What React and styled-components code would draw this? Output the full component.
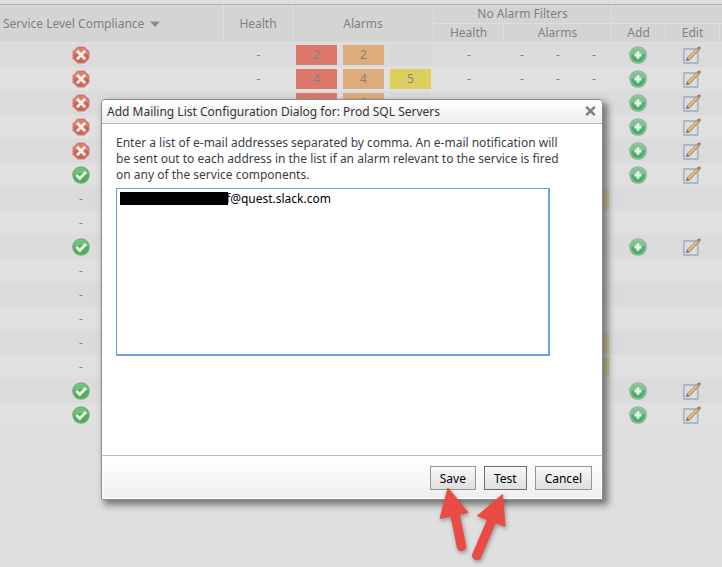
import React, { Fragment, useState } from "react";
import styled, { createGlobalStyle } from "styled-components";

const rows = [
  { state: "error", alarms: [2, 2, ""], filters: ["-", "-", "-"], actions: true },
  { state: "error", alarms: [4, 4, 5], filters: ["-", "-", "-"], actions: true },
  { state: "error", alarms: [4, 2, ""], actions: true },
  { state: "error", actions: true },
  { state: "error", actions: true },
  { state: "ok", actions: true },
  { filtered: true },
  {},
  { state: "ok", actions: true },
  {},
  {},
  {},
  { filtered: true },
  { filtered: true },
  { state: "ok", actions: true },
  { state: "ok", actions: true },
];

const alarmColors = ["#de786a", "#deab7a", "#dccf5e"];

function ErrorIcon() {
  return (
    <Icon viewBox="0 0 18 18" role="img" aria-label="Error">
      <path d="M5.6 .5h6.8l5.1 5.1v6.8l-5.1 5.1H5.6L.5 12.4V5.6z" fill="#c9837c" />
      <path d="M6 1.6h6L16.4 6v6L12 16.4H6L1.6 12V6z" fill="#d5604f" />
      <path d="M6 1.6h6L16.4 6v2.4Q9 6.4 1.6 9V6z" fill="#dc8073" />
      <path
        d="M6 5.8l6.2 6.4M12.2 5.8L6 12.2"
        stroke="#efebe8"
        strokeWidth="3"
        strokeLinecap="square"
      />
    </Icon>
  );
}

function OkIcon() {
  return (
    <Icon viewBox="0 0 18 18" role="img" aria-label="OK">
      <circle cx="9" cy="9" r="8.8" fill="#7fb586" />
      <circle cx="9" cy="9" r="7.9" fill="#4bb153" />
      <path d="M1.8 8.5a7.2 7.2 0 0 1 14.4 0Q9 5.5 1.8 8.5z" fill="#74bf79" />
      <path
        d="M4.2 8.8l3.6 3.7 6.2-6.6"
        fill="none"
        stroke="#f0f3ee"
        strokeWidth="2.9"
      />
    </Icon>
  );
}

function AddIcon() {
  return (
    <Icon viewBox="0 0 18 18" aria-hidden="true">
      <circle cx="9" cy="9" r="8.8" fill="#7dae8b" />
      <circle cx="9" cy="9" r="7.8" fill="#a3d2ae" />
      <circle cx="9" cy="9.4" r="7" fill="#4aaf68" />
      <path d="M2.4 8.6a6.7 6.7 0 0 1 13.2 0Q9 6.2 2.4 8.6z" fill="#83c494" />
      <path d="M9 5.4v7.4M5.3 9.1h7.4" stroke="#eef3ee" strokeWidth="2.8" />
    </Icon>
  );
}

function EditIcon() {
  return (
    <Icon viewBox="0 0 18 18" aria-hidden="true">
      <path d="M.8 3h14v14H.8z" fill="#d6dadf" stroke="#a0abb9" strokeWidth="1.3" />
      <path d="M2.5 4.7h10.6v10.6H2.5z" fill="#dcdfe3" />
      <path d="M5 13.2l10.6-10.6" stroke="#a58d6c" strokeWidth="3.8" />
      <path d="M5.3 12.9l10-10" stroke="#dfae63" strokeWidth="2.6" />
      <path d="M5 12.2l9.4-9.4" stroke="#edd19b" strokeWidth="1" />
      <path d="M14.2 1.8l2.2 2.2 1.4-1.5q.4-1.6-1.8-2.2z" fill="#b47b72" />
      <path d="M13.5 2.4l2.3 2.4" stroke="#8f97a5" strokeWidth="1.2" />
      <path d="M3.1 15.1l.8-3.3 2.5 2.4z" fill="#686a72" />
    </Icon>
  );
}

function ServiceRow({ row }) {
  const filters = row.filters || [];

  return (
    <Row>
      <StateCell>
        <State>
          {row.state === "error" && <ErrorIcon />}
          {row.state === "ok" && <OkIcon />}
          {!row.state && "-"}
        </State>
      </StateCell>
      <Cell>{row.filters && "-"}</Cell>
      {alarmColors.map((color, i) => (
        <Cell key={color}>
          {row.alarms && (
            <Alarm $color={row.alarms[i] ? color : "#d8d8d8"}>{row.alarms[i]}</Alarm>
          )}
        </Cell>
      ))}
      <Cell>{row.filters && "-"}</Cell>
      <Cell>{filters[0]}</Cell>
      <Cell>{filters[1]}</Cell>
      <Cell>{row.filtered ? <Alarm $color="#dccf5e" /> : filters[2]}</Cell>
      <ActionCell>
        {row.actions && (
          <IconButton aria-label="Add">
            <AddIcon />
          </IconButton>
        )}
      </ActionCell>
      <ActionCell>
        {row.actions && (
          <IconButton aria-label="Edit">
            <EditIcon />
          </IconButton>
        )}
      </ActionCell>
      <Cell />
    </Row>
  );
}

function ServiceTable() {
  return (
    <Table>
      <colgroup>
        <Col $width={223} />
        <Col $width={69} />
        <Col $width={47} />
        <Col $width={47} />
        <Col $width={47} />
        <Col $width={70} />
        <Col $width={36} />
        <Col $width={36} />
        <Col $width={36} />
        <Col $width={54} />
        <Col $width={54} />
        <col />
      </colgroup>
      <thead>
        <tr>
          <SortHead rowSpan={2}>
            Service Level Compliance
            <SortArrow viewBox="0 0 10 6" aria-hidden="true">
              <path d="M0 .5h10L5 6z" fill="#858a93" />
            </SortArrow>
          </SortHead>
          <Head rowSpan={2}>Health</Head>
          <Head rowSpan={2} colSpan={3}>Alarms</Head>
          <Head colSpan={4}>No Alarm Filters</Head>
          <Head colSpan={3} />
        </tr>
        <tr>
          <Head>Health</Head>
          <Head colSpan={3}>Alarms</Head>
          <Head>Add</Head>
          <Head>Edit</Head>
          <Head />
        </tr>
      </thead>
      <tbody>
        {rows.map((row, i) => (
          <ServiceRow key={i} row={row} />
        ))}
      </tbody>
    </Table>
  );
}

function MailingListDialog() {
  const [emails, setEmails] = useState("f@quest.slack.com");

  return (
    <Dialog role="dialog" aria-labelledby="dialog-title">
      <TitleBar>
        <Title id="dialog-title">
          Add Mailing List Configuration Dialog for: Prod SQL Servers
        </Title>
        <Close aria-label="Close">
          <CloseIcon viewBox="0 0 11 10" aria-hidden="true">
            <path d="M1.2 .8l8.6 8.4M9.8 .8L1.2 9.2" stroke="#808080" strokeWidth="2.4" />
          </CloseIcon>
        </Close>
      </TitleBar>
      <Body>
        <Label htmlFor="emails">
          Enter a list of e-mail addresses separated by comma. An e-mail notification
          will be sent out to each address in the list if an alarm relevant to the
          service is fired on any of the service components.
        </Label>
        <Field>
          <Emails
            id="emails"
            spellCheck={false}
            value={emails}
            onChange={(e) => setEmails(e.target.value)}
          />
          <Redaction />
        </Field>
      </Body>
      <Footer>
        <Button>Save</Button>
        <Button $active>Test</Button>
        <Button>Cancel</Button>
      </Footer>
      <Arrows viewBox="430 480 85 87" aria-hidden="true">
        <g fill="#ea4b44" stroke="#ea4b44">
          <path d="M448 488l-8 30.5 28-6z" strokeWidth="1" />
          <path d="M454.5 512l7 34.5" strokeWidth="9.5" strokeLinecap="round" />
          <path d="M502.5 494.5l-25 21.3 27.5 10.5z" strokeWidth="1" />
          <path d="M491.5 521l-14.7 34.5" strokeWidth="9.5" strokeLinecap="round" />
        </g>
      </Arrows>
    </Dialog>
  );
}

function App() {
  return (
    <Fragment>
      <GlobalStyle />
      <Page>
        <ServiceTable />
        <Overlay>
          <MailingListDialog />
        </Overlay>
      </Page>
    </Fragment>
  );
}

export default App;

const GlobalStyle = createGlobalStyle`
  * {
    box-sizing: border-box;
  }
  body {
    margin: 0;
    background: #dfdfdf;
    font-family: "Noto Sans", sans-serif;
    font-size: 12px;
    overflow: hidden;
  }
  button, textarea {
    font: inherit;
  }
`;
const Page = styled.main`
  position: relative;
  min-height: 100vh;
  padding-top: 4px;
`;
const Table = styled.table`
  width: 100%;
  table-layout: fixed;
  border-collapse: separate;
  border-spacing: 0;
  border-top: 1px solid #b4b4b4;
  color: #7d828a;
`;
const Col = styled.col`
  width: ${(props) => props.$width}px;
`;
const Head = styled.th`
  height: 19px;
  padding: 0;
  font-weight: normal;
  line-height: 18px;
  background: #d4d4d4;
  border-left: 1px solid #e0e0e0;
  border-bottom: 1px solid #dedede;
`;
const SortHead = styled(Head)`
  padding-left: 3px;
  text-align: left;
  border-left: none;
`;
const SortArrow = styled.svg`
  width: 10px;
  height: 6px;
  margin-left: 6px;
  vertical-align: 1px;
`;
const Row = styled.tr`
  height: 24px;
  background: #e0e0e0;
  &:nth-child(odd) {
    background: #dbdbdd;
  }
`;
const Cell = styled.td`
  height: 24px;
  padding: 0 2px 0 4px;
  text-align: center;
  line-height: 20px;
`;
const StateCell = styled(Cell)`
  padding-left: 72px;
`;
const ActionCell = styled(Cell)`
  padding: 0;
`;
const State = styled.div`
  display: flex;
  justify-content: center;
  align-items: center;
  width: 18px;
  height: 18px;
`;
const Alarm = styled.div`
  height: 20px;
  background: ${(props) => props.$color};
`;
const Icon = styled.svg`
  display: block;
  width: 18px;
  height: 18px;
`;
const IconButton = styled.button`
  display: block;
  margin: 0 auto;
  padding: 0;
  border: none;
  background: none;
  cursor: pointer;
`;
const Overlay = styled.div`
  position: absolute;
  inset: 0;
  padding: 99px 119px 0 101px;
`;
const Dialog = styled.section`
  position: relative;
  background: white;
  border: 1px solid #8c8c8c;
  border-radius: 4px 4px 0 0;
  box-shadow: 4px 4px 7px 1px #777777;
`;
const TitleBar = styled.header`
  display: flex;
  justify-content: space-between;
  align-items: center;
  height: 24px;
  padding: 0 6px 0 5px;
  border-bottom: 1px solid #b9b9b9;
  border-radius: 4px 4px 0 0;
  background: linear-gradient(#ffffff, #ededed);
`;
const Title = styled.h1`
  margin: 0;
  font-size: 12px;
  font-weight: normal;
  line-height: 18px;
  color: #333333;
`;
const Close = styled.button`
  padding: 0 0 2px;
  border: none;
  background: none;
  cursor: pointer;
`;
const CloseIcon = styled.svg`
  display: block;
  width: 11px;
  height: 10px;
`;
const Body = styled.div`
  height: 331px;
  padding: 11px 14px 0;
`;
const Label = styled.label`
  display: block;
  max-width: 457px;
  line-height: 16px;
  color: #3b3e48;
`;
const Field = styled.div`
  position: relative;
  margin: 5px 38px 0 0;
`;
const Emails = styled.textarea`
  display: block;
  width: 100%;
  height: 168px;
  padding: 2px;
  border: 2px solid #6f9fe0;
  border-top-width: 1px;
  border-left-width: 1px;
  outline: none;
  resize: none;
  line-height: 16px;
  text-indent: 107px;
  color: black;
`;
const Redaction = styled.span`
  position: absolute;
  top: 4px;
  left: 4px;
  width: 108px;
  height: 13px;
  background: black;
`;
const Footer = styled.footer`
  display: flex;
  justify-content: flex-end;
  gap: 8px;
  height: 44px;
  padding: 10px 9px;
  border: 1px solid white;
  border-top: 1px solid #b9b9b9;
  background: linear-gradient(#ffffff, #efefef);
`;
const Button = styled.button`
  height: 24px;
  padding: 0 9px;
  border: 1px solid ${(props) => (props.$active ? "#6e6e6e" : "#959595")};
  background: linear-gradient(#f8f8f8, #dfdfdf);
  color: black;
  cursor: pointer;
`;
const Arrows = styled.svg`
  position: absolute;
  right: 87px;
  bottom: -68px;
  width: 85px;
  height: 87px;
  pointer-events: none;
  filter: drop-shadow(1px 2px 2px rgba(0, 0, 0, 0.35));
`;
